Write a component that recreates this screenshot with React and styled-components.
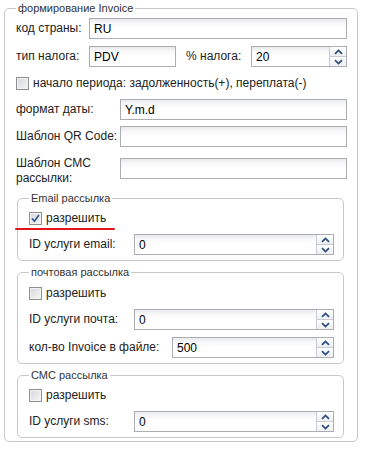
import React from "react";
import styled, { createGlobalStyle } from "styled-components";

const GlobalStyle = createGlobalStyle`
  body {
    margin: 0;
    background: #ffffff;
    font-family: "Liberation Sans", Arial, sans-serif;
    font-size: 12px;
    color: #222222;
  }
`;

const Group = styled.fieldset`
  box-sizing: border-box;
  min-inline-size: 0;
  border: 1px solid #c8c8c8;
  border-radius: 5px;
  margin: ${(p) => (p.$outer ? "2px 0 0 4px" : `${p.$mt || 0}px 3px 0 1px`)};
  width: ${(p) => (p.$outer ? "354px" : "auto")};
  padding: ${(p) => (p.$outer ? "3px 10px 3px 11px" : "5px 9px 5px 11px")};
`;

const Legend = styled.legend`
  font-size: 11px;
  line-height: 13px;
  padding: 0 2px;
  color: #333333;
`;

const Row = styled.div`
  display: flex;
  align-items: ${(p) => (p.$top ? "flex-start" : "center")};
  margin-top: ${(p) => p.$mt || 0}px;
`;

const Label = styled.label`
  flex: none;
  width: ${(p) => p.$w}px;
  margin-left: ${(p) => p.$ml || 0}px;
  margin-top: ${(p) => (p.$two ? -2 : 0)}px;
  line-height: 15px;
  color: #222222;
`;

const fieldLook = `
  box-sizing: border-box;
  height: 21px;
  border: 1px solid #abadb3;
  background: linear-gradient(#e9eaec 0, #f7f7f8 4px, #ffffff 9px);
`;

const TextInput = styled.input`
  ${fieldLook}
  flex: ${(p) => (p.$w ? "none" : "1")};
  width: ${(p) => (p.$w ? `${p.$w}px` : "auto")};
  min-width: 0;
  padding: 0 4px;
  font-family: "Liberation Sans", Arial, sans-serif;
  font-size: 12px;
  color: #000000;
  outline: none;
`;

const SpinBox = styled.div`
  ${fieldLook}
  flex: 1;
  min-width: 0;
  display: flex;
`;

const SpinInput = styled.input`
  flex: 1;
  min-width: 0;
  border: none;
  background: transparent;
  padding: 0 4px;
  font-family: "Liberation Sans", Arial, sans-serif;
  font-size: 12px;
  color: #000000;
  outline: none;
`;

const SpinButtons = styled.div`
  flex: none;
  width: 16px;
  display: flex;
  flex-direction: column;
  border-left: 1px solid #c9ccd2;
`;

const SpinButton = styled.div`
  flex: 1;
  display: flex;
  align-items: center;
  justify-content: center;
  background: linear-gradient(#ffffff, #eceef1);
  border-top: ${(p) => (p.$down ? "1px solid #c9ccd2" : "none")};
`;

const Chevron = ({ down }) => (
  <svg width="9" height="6" viewBox="0 0 9 6">
    <path
      d={down ? "M1 1.2 L4.5 4.6 L8 1.2" : "M1 4.8 L4.5 1.4 L8 4.8"}
      fill="none"
      stroke="#2f4d7d"
      strokeWidth="1.8"
    />
  </svg>
);

const Spinner = ({ value }) => (
  <SpinBox>
    <SpinInput defaultValue={value} />
    <SpinButtons>
      <SpinButton>
        <Chevron />
      </SpinButton>
      <SpinButton $down>
        <Chevron down />
      </SpinButton>
    </SpinButtons>
  </SpinBox>
);

const CheckRow = styled.div`
  position: relative;
  display: flex;
  align-items: center;
  gap: 4px;
  height: 16px;
  margin-top: ${(p) => p.$mt || 0}px;
`;

const Box = styled.span`
  box-sizing: border-box;
  flex: none;
  width: 13px;
  height: 13px;
  border: 1px solid #8e8f8f;
  background: linear-gradient(135deg, #d6d7d9, #f6f6f7);
  box-shadow: inset 0 0 0 1px #f2f2f2;
  display: flex;
  align-items: center;
  justify-content: center;
`;

const RedMark = styled.span`
  position: absolute;
  left: -14px;
  top: 18px;
  width: 100px;
  height: 2px;
  background: #e2141c;
  border-radius: 1px;
`;

const Check = ({ label, checked, marked, mt }) => (
  <CheckRow $mt={mt}>
    <Box>
      {checked && (
        <svg width="9" height="9" viewBox="0 0 9 9">
          <path d="M1 4.5 L3.4 7.2 L8 1" fill="none" stroke="#34578f" strokeWidth="1.7" />
        </svg>
      )}
    </Box>
    <span>{label}</span>
    {marked && <RedMark />}
  </CheckRow>
);

export default function App() {
  return (
    <>
      <GlobalStyle />
      <Group $outer>
        <Legend>формирование Invoice</Legend>
        <Row>
          <Label $w={73}>код страны:</Label>
          <TextInput defaultValue="RU" />
        </Row>
        <Row $mt={7}>
          <Label $w={73}>тип налога:</Label>
          <TextInput $w={87} defaultValue="PDV" />
          <Label $w={65} $ml={10}>
            % налога:
          </Label>
          <Spinner value="20" />
        </Row>
        <Check mt={8} label="начало периода: задолженность(+), переплата(-)" />
        <Row $mt={8}>
          <Label $w={104}>формат даты:</Label>
          <TextInput defaultValue="Y.m.d" />
        </Row>
        <Row $mt={6}>
          <Label $w={104}>Шаблон QR Code:</Label>
          <TextInput />
        </Row>
        <Row $mt={11} $top>
          <Label $w={104} $two>
            Шаблон СМС
            <br />
            рассылки:
          </Label>
          <TextInput />
        </Row>

        <Group $mt={6}>
          <Legend>Email рассылка</Legend>
          <Check checked marked label="разрешить" />
          <Row $mt={8}>
            <Label $w={105}>ID услуги email:</Label>
            <Spinner value="0" />
          </Row>
        </Group>

        <Group $mt={5}>
          <Legend>почтовая рассылка</Legend>
          <Check mt={1} label="разрешить" />
          <Row $mt={8}>
            <Label $w={105}>ID услуги почта:</Label>
            <Spinner value="0" />
          </Row>
          <Row $mt={7}>
            <Label $w={143}>кол-во Invoice в файле:</Label>
            <Spinner value="500" />
          </Row>
        </Group>

        <Group $mt={5}>
          <Legend>СМС рассылка</Legend>
          <Check label="разрешить" />
          <Row $mt={8}>
            <Label $w={105}>ID услуги sms:</Label>
            <Spinner value="0" />
          </Row>
        </Group>
      </Group>
    </>
  );
}
